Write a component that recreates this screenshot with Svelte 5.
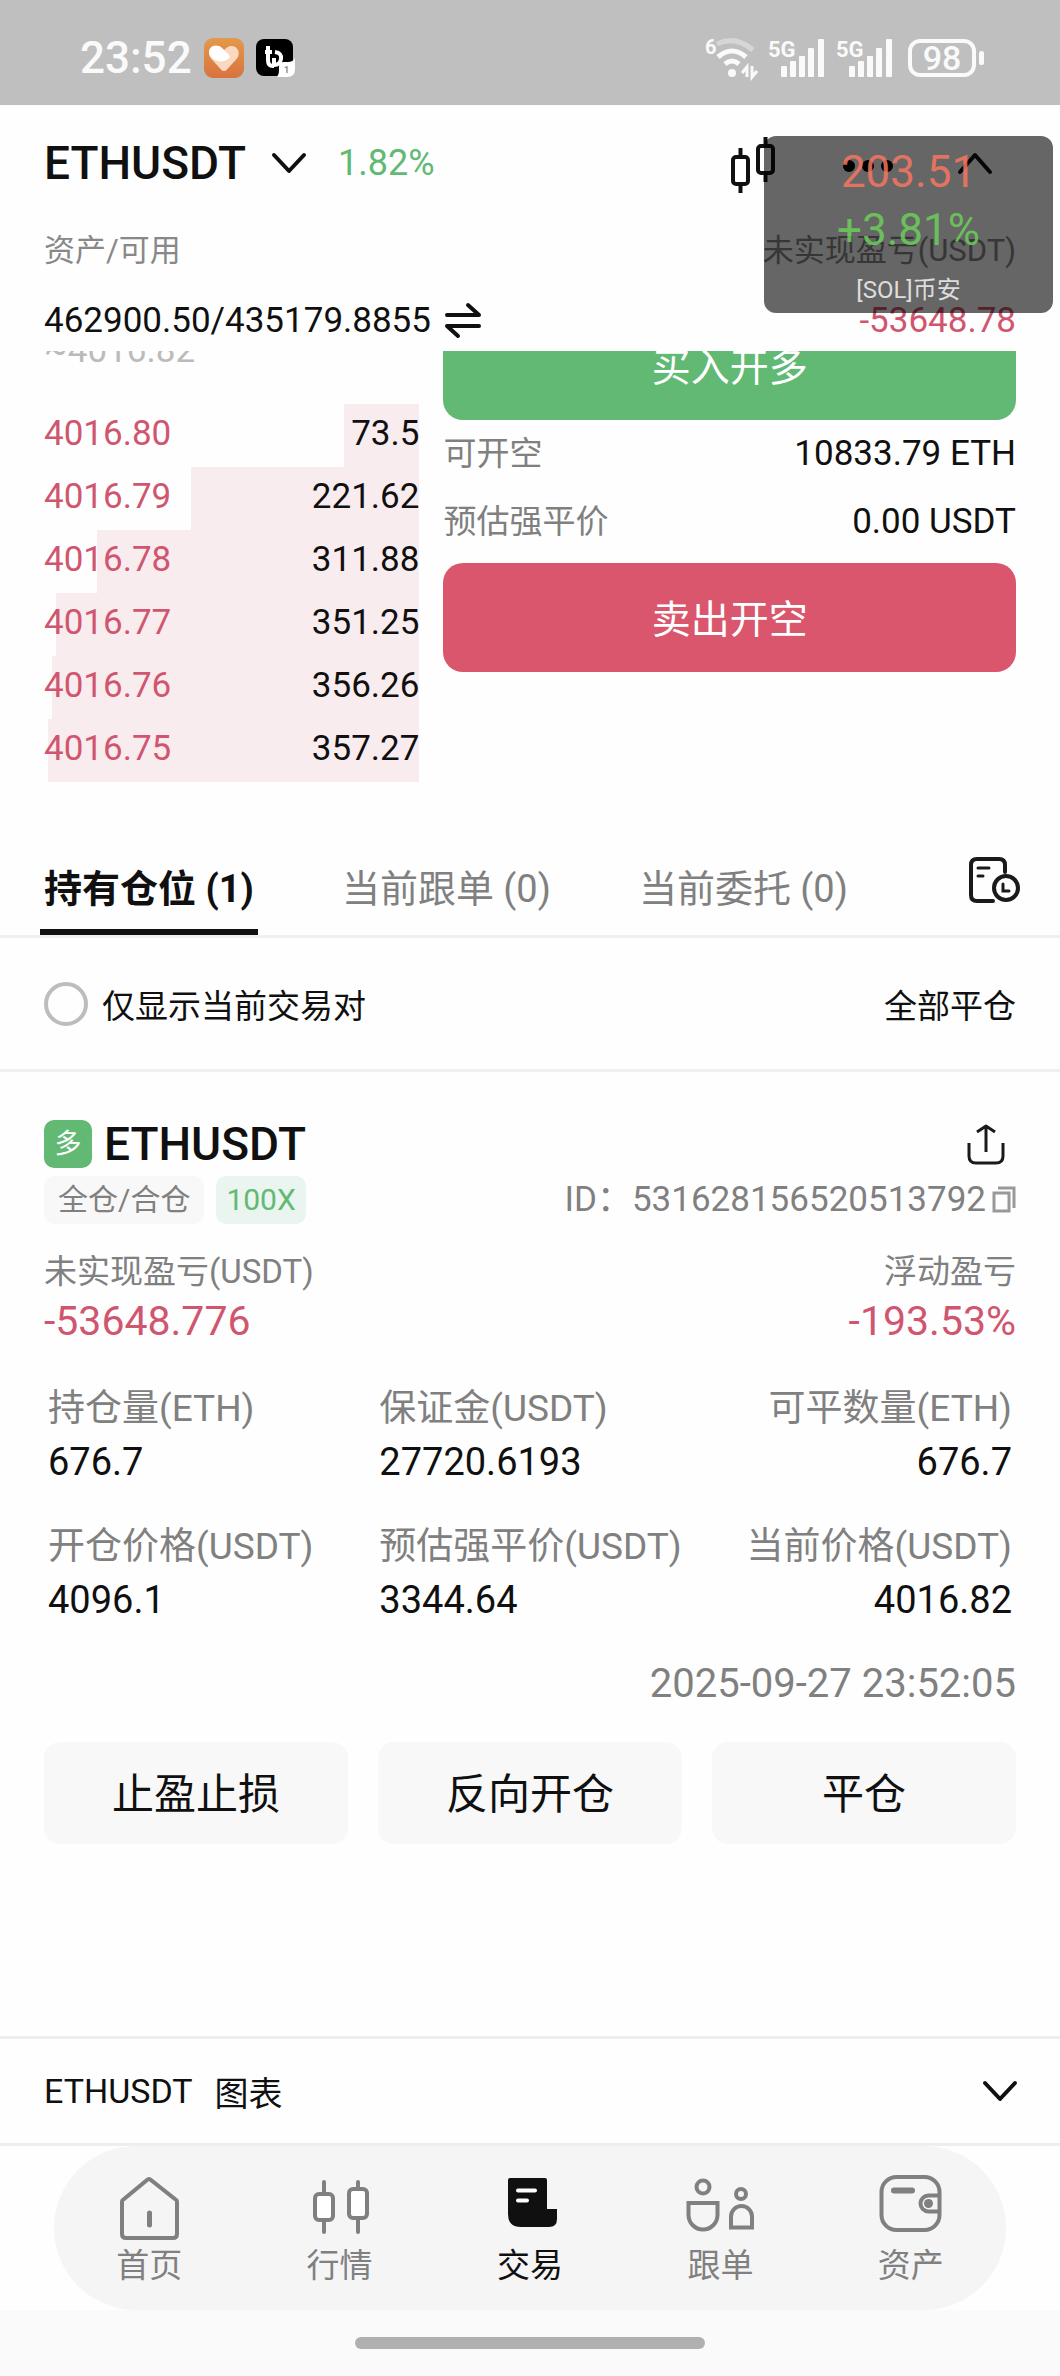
<script lang="ts">
  type Ask = { price: string; amount: string; depth: number };
  type Metric = { label: string; value: string };

  const asks: Ask[] = [
    { price: '4016.80', amount: '73.5', depth: 20 },
    { price: '4016.79', amount: '221.62', depth: 61 },
    { price: '4016.78', amount: '311.88', depth: 86 },
    { price: '4016.77', amount: '351.25', depth: 97 },
    { price: '4016.76', amount: '356.26', depth: 98 },
    { price: '4016.75', amount: '357.27', depth: 99 },
  ];

  const tabs = ['持有仓位 (1)', '当前跟单 (0)', '当前委托 (0)'];

  const metrics: Metric[] = [
    { label: '持仓量(ETH)', value: '676.7' },
    { label: '保证金(USDT)', value: '27720.6193' },
    { label: '可平数量(ETH)', value: '676.7' },
    { label: '开仓价格(USDT)', value: '4096.1' },
    { label: '预估强平价(USDT)', value: '3344.64' },
    { label: '当前价格(USDT)', value: '4016.82' },
  ];

  const actions = ['止盈止损', '反向开仓', '平仓'];

  const navItems = [
    { id: 'home', label: '首页' },
    { id: 'market', label: '行情' },
    { id: 'trade', label: '交易' },
    { id: 'copy', label: '跟单' },
    { id: 'assets', label: '资产' },
  ];

  let activeTab = $state(0);
  let activeNav = $state('trade');
  let onlyCurrentPair = $state(false);
</script>

{#snippet signal()}
  <svg width="57" height="40" viewBox="0 0 57 40" fill="#fafafa" aria-hidden="true">
    <text x="0" y="19" font-size="22" font-weight="700" font-family="Roboto, sans-serif">5G</text>
    <rect x="13" y="28" width="6" height="11" rx="1" />
    <rect x="22" y="23" width="6" height="16" rx="1" />
    <rect x="31" y="18" width="6" height="21" rx="1" />
    <rect x="40" y="10" width="6" height="29" rx="1" />
    <rect x="50" y="1" width="6" height="38" rx="1" />
  </svg>
{/snippet}

<div class="app">
  <div class="status-bar">
    <div class="status-left">
      <span class="clock">23:52</span>
      <svg width="40" height="40" viewBox="0 0 40 40" aria-hidden="true">
        <defs>
          <linearGradient id="heart-bg" x1="0" y1="0" x2="0" y2="1">
            <stop offset="0" stop-color="#e2994c" />
            <stop offset="1" stop-color="#d9733f" />
          </linearGradient>
        </defs>
        <rect width="40" height="40" rx="9" fill="url(#heart-bg)" />
        <path d="M20 33Q18.500 33 17 31.500L7 20.500C1.500 13 9.500 4.500 17 9.500L20 12L23 9.500C30.500 4.500 38.500 13 33 20.500L23 31.500Q21.500 33 20 33Z" fill="#fbd9be" />
        <path d="M6 18C2 10 11 4 18 10L26 18Q25 22 20 23Q12 25 6 18Z" fill="#fff" />
      </svg>
      <svg class="tb-icon" width="40" height="40" viewBox="0 0 40 40" aria-hidden="true">
        <rect x="0" y="1" width="37" height="37" rx="8" />
        <path d="M12 8v14q0 6 5 6h1M9 14h7M19 14q7 1 6 7q-1 6-7 6v-7" fill="none" stroke="#fff" stroke-width="4" />
        <path d="M23 29q0-5 5-5h4q5 0 7-4v11q0 8-8 8H21q2-3 2-6z" fill="#fff" />
        <text x="28" y="35" font-size="9" font-weight="700" fill="#888" font-family="Roboto, sans-serif">1</text>
      </svg>
    </div>
    <div class="status-right">
      <svg width="52" height="40" viewBox="0 0 52 40" fill="none" aria-hidden="true">
        <text x="0" y="16" font-size="20" font-weight="700" fill="#fafafa" font-family="Roboto, sans-serif">6</text>
        <path d="M12 6Q30-3 48 12" stroke="#d6d6d6" stroke-width="5" />
        <path d="M13 19Q27 7 41 19" stroke="#fafafa" stroke-width="5" />
        <path d="M20 26Q27 20 34 26" stroke="#fafafa" stroke-width="5" />
        <circle cx="27" cy="35" r="4" fill="#fafafa" />
        <path d="M42 39V29l-5 6M47 28v11l5-6" stroke="#fafafa" stroke-width="3" />
      </svg>
      {@render signal()}
      {@render signal()}
      <div class="battery"><span>98</span></div>
    </div>
  </div>

  <header class="pair-bar">
    <button class="pair">
      <span class="symbol">ETHUSDT</span>
      <svg width="34" height="22" viewBox="0 0 34 22" aria-hidden="true"><path class="line" d="M2 3l15 16L32 3" /></svg>
    </button>
    <span class="change">1.82%</span>
    <div class="pair-tools">
      <button aria-label="K线">
        <svg width="50" height="60" viewBox="0 0 50 60" fill="none" stroke="#101010" stroke-width="4" aria-hidden="true">
          <rect x="5" y="24" width="15" height="27" rx="3" />
          <path d="M12.500 15v9M12.500 51v9" />
          <rect x="30" y="13" width="15" height="27" rx="3" />
          <path d="M37.500 4v9M37.500 40v9" />
        </svg>
      </button>
      <button aria-label="更多">
        <svg width="52" height="22" viewBox="0 0 52 22" aria-hidden="true">
          <circle cx="7" cy="14" r="6" /><circle cx="26" cy="14" r="6" /><circle cx="45" cy="14" r="6" />
        </svg>
      </button>
      <button aria-label="收起">
        <svg width="34" height="22" viewBox="0 0 34 22" aria-hidden="true"><path class="line" d="M2 20L17 3l15 17" /></svg>
      </button>
    </div>
  </header>

  <section class="account">
    <div class="account-labels">
      <span>资产/可用</span>
      <span>未实现盈亏(USDT)</span>
    </div>
    <div class="account-values">
      <span>462900.50/435179.8855</span>
      <button class="swap" aria-label="划转">
        <svg width="36" height="36" viewBox="0 0 36 36" aria-hidden="true">
          <path class="line" d="M2 12h32L23 2M34 23H2l11 10" />
        </svg>
      </button>
      <span class="loss">-53648.78</span>
    </div>
  </section>

  <main>
    <section class="trade">
      <div class="trade-scroll">
        <div class="book">
          <div class="mark-price">~4016.82</div>
          <table>
            <tbody>
              {#each asks as ask (ask.price)}
                <tr style="background-size: {ask.depth}% 100%">
                  <td class="loss">{ask.price}</td>
                  <td class="amount">{ask.amount}</td>
                </tr>
              {/each}
            </tbody>
          </table>
        </div>
        <div class="order">
          <button class="submit buy">买入开多</button>
          <div class="order-row"><span>可开空</span><b>10833.79 ETH</b></div>
          <div class="order-row"><span>预估强平价</span><b>0.00 USDT</b></div>
          <button class="submit sell">卖出开空</button>
        </div>
      </div>
    </section>

    <nav class="tabs">
      {#each tabs as tab, i}
        <button class="tab" class:active={activeTab === i} onclick={() => (activeTab = i)}>{tab}</button>
      {/each}
      <button class="history" aria-label="历史记录">
        <svg width="52" height="50" viewBox="0 0 52 50" fill="none" stroke="#1a1a1a" stroke-width="4" stroke-linecap="round" aria-hidden="true">
          <path d="M25 46H9q-6 0-6-6V10q0-6 6-6h22q6 0 6 6v7" />
          <path d="M10 13h11M10 21h5" stroke-width="3" />
          <circle cx="38" cy="33" r="12" />
          <path d="M35 29v7h6" stroke-width="3" />
        </svg>
      </button>
    </nav>

    <div class="filter">
      <label>
        <input type="checkbox" bind:checked={onlyCurrentPair} />
        仅显示当前交易对
      </label>
      <button>全部平仓</button>
    </div>

    <article class="position">
      <div class="position-head">
        <span class="side">多</span>
        <h2 class="symbol">ETHUSDT</h2>
        <button class="share" aria-label="分享">
          <svg width="40" height="42" viewBox="0 0 40 42" fill="none" stroke="#1a1a1a" stroke-width="3" stroke-linejoin="round" aria-hidden="true">
            <path d="M3 20v13q0 7 7 7h20q7 0 7-7V20M20 29V3M11 9l9-6l9 6" />
          </svg>
        </button>
      </div>
      <div class="tags">
        <span class="tag">全仓/合仓</span>
        <span class="tag leverage">100X</span>
        <span class="order-id">ID：531628156520513792</span>
        <button class="copy" aria-label="复制">
          <svg width="24" height="28" viewBox="0 0 24 28" fill="none" stroke="#999" stroke-width="3" aria-hidden="true">
            <path d="M2 7h15v18H2zM6 2h16v20" />
          </svg>
        </button>
      </div>
      <dl class="pnl">
        <div><dt>未实现盈亏(USDT)</dt><dd>-53648.776</dd></div>
        <div><dt>浮动盈亏</dt><dd>-193.53%</dd></div>
      </dl>
      <dl class="metrics">
        {#each metrics as metric (metric.label)}
          <div><dt>{metric.label}</dt><dd>{metric.value}</dd></div>
        {/each}
      </dl>
      <time datetime="2025-09-27T23:52:05">2025-09-27 23:52:05</time>
      <div class="actions">
        {#each actions as action}
          <button>{action}</button>
        {/each}
      </div>
    </article>
  </main>

  <footer>
    <button class="chart-toggle">
      <span>ETHUSDT</span>
      <span>图表</span>
      <svg width="34" height="22" viewBox="0 0 34 22" aria-hidden="true"><path class="line" d="M2 3l15 16L32 3" /></svg>
    </button>
    <nav class="bottom-nav">
      {#each navItems as item (item.id)}
        <button class:active={activeNav === item.id} onclick={() => (activeNav = item.id)}>
          <svg width="76" height="70" viewBox="0 0 76 70" fill="none" stroke="currentColor" stroke-width="4" aria-hidden="true">
            {#if item.id === 'home'}
              <path d="M11 30q0-2 2-3L36 8q2-2 4 0l24 19q2 1 2 3v32q0 4-4 4H15q-4 0-4-4z" />
              <path d="M38.500 41v12" stroke-width="5" stroke-linecap="round" />
            {:else if item.id === 'market'}
              <path d="M22 10v50M56 10v50" stroke-linecap="round" />
              <rect x="13" y="22" width="18" height="26" rx="4" fill="#fff" />
              <rect x="47" y="17" width="18" height="29" rx="4" fill="#fff" />
            {:else if item.id === 'trade'}
              <path d="M18 6h35q2 0 2 2v29h10v10q0 8-8 8H29q-13 0-13-13V8q0-2 2-2z" fill="currentColor" stroke="none" />
              <path d="M26 18.500h17M26 28.500h9" stroke="#fff" stroke-linecap="round" />
            {:else if item.id === 'copy'}
              <circle cx="21" cy="15" r="6.500" />
              <path d="M6.500 31h29v12a14.500 14.500 0 0 1-29 0z" />
              <circle cx="59" cy="22" r="5" />
              <path d="M49 55.500V44.500a10.500 10.500 0 0 1 21 0v11z" />
            {:else}
              <rect x="8.500" y="5" width="58" height="53" rx="15" />
              <path d="M21 18.500h18" stroke-width="6" stroke-linecap="round" />
              <path d="M66.500 23.500h-11a8 8 0 0 0 0 16h11" />
              <circle cx="55.500" cy="31.500" r="4.500" fill="currentColor" stroke="none" />
            {/if}
          </svg>
          {item.label}
        </button>
      {/each}
    </nav>
    <div class="home-bar"><span></span></div>
  </footer>

  <aside class="ticker">
    <span class="ticker-price">203.51</span>
    <span class="ticker-change">+3.81%</span>
    <span class="ticker-name">[SOL]币安</span>
  </aside>
</div>

<style>
  :global(body) {
    margin: 0;
    background: #fefefe;
  }

  .app {
    position: relative;
    display: flex;
    flex-direction: column;
    min-height: 100vh;
    color: #101010;
    font-family: Roboto, 'Noto Sans CJK SC', sans-serif;
    font-size: 35px;
  }

  button {
    padding: 0;
    border: none;
    background: none;
    color: inherit;
    font: inherit;
    cursor: pointer;
  }

  svg {
    display: block;
    flex: none;
    overflow: visible;
  }

  dl,
  dd,
  h2 {
    margin: 0;
  }

  .line {
    fill: none;
    stroke: #101010;
    stroke-width: 4;
    stroke-linecap: round;
    stroke-linejoin: round;
  }

  .loss {
    color: #d0566f;
  }

  .symbol {
    font-size: 46px;
    font-weight: 500;
  }

  /* status bar */
  .status-bar {
    display: flex;
    justify-content: space-between;
    align-items: center;
    height: 105px;
    padding: 10px 76px 0 80px;
    box-sizing: border-box;
    background: #bfbfbf;
    color: #fafafa;
  }

  .status-left {
    display: flex;
    align-items: center;
    gap: 12px;
  }

  .status-right {
    display: flex;
    align-items: center;
    gap: 11px;
  }

  .clock {
    font-size: 44px;
    font-weight: 500;
  }

  .battery {
    position: relative;
    width: 60px;
    margin: 0 8px 0 4px;
    border: 4px solid #fafafa;
    border-radius: 12px;
    font-size: 34px;
    font-weight: 500;
    line-height: 30px;
    text-align: center;
  }

  .battery::after {
    content: '';
    position: absolute;
    top: 8px;
    right: -12px;
    width: 5px;
    height: 14px;
    border-radius: 2px;
    background: #fafafa;
  }

  /* pair header */
  .pair-bar {
    display: flex;
    align-items: center;
    height: 116px;
    padding: 0 68px 0 44px;
  }

  .pair {
    display: flex;
    align-items: center;
    gap: 26px;
  }

  .change {
    margin-left: 32px;
    color: #62b974;
    font-size: 36px;
  }

  .pair-tools {
    display: flex;
    align-items: center;
    gap: 64px;
    margin-left: auto;
  }

  /* account */
  .account {
    padding: 0 44px;
  }

  .account-labels {
    display: flex;
    justify-content: space-between;
    padding-bottom: 6px;
    color: #888;
    font-size: 31px;
    line-height: 60px;
  }

  .account-values {
    display: flex;
    align-items: center;
    gap: 14px;
    padding-top: 4px;
    line-height: 60px;
  }

  .account-values .loss {
    margin-left: auto;
  }

  main {
    flex: 1;
  }

  /* trade panel, scrolled under the account header */
  .trade {
    overflow: hidden;
    padding: 0 44px;
  }

  .trade-scroll {
    display: grid;
    grid-template-columns: 375fr 572fr;
    column-gap: 24px;
    margin-top: -40px;
  }

  .book {
    padding-top: 8px;
  }

  .mark-price {
    margin-bottom: 22px;
    color: #bbb;
    line-height: 63px;
  }

  table {
    width: 100%;
    border-collapse: collapse;
  }

  tr {
    background: linear-gradient(#f9ecef, #f9ecef) no-repeat right;
  }

  td {
    padding: 0 0 4px;
    line-height: 59px;
  }

  .amount {
    text-align: right;
  }

  .submit {
    display: block;
    width: 100%;
    height: 109px;
    padding-bottom: 4px;
    border-radius: 20px;
    color: #fff;
    font-size: 39px;
  }

  .buy {
    background: #62b974;
  }

  .sell {
    margin-top: 7px;
    background: #d9566d;
  }

  .order-row {
    display: flex;
    justify-content: space-between;
    line-height: 68px;
  }

  .order-row span {
    color: #808080;
    font-size: 33px;
  }

  .order-row b {
    font-weight: 400;
  }

  /* position tabs */
  .tabs {
    display: flex;
    gap: 80px;
    margin-top: 55px;
    padding: 0 40px;
    border-bottom: 3px solid #f0f0f0;
  }

  .tab {
    padding: 12px 4px 0;
    border-bottom: 6px solid transparent;
    color: #808080;
    font-size: 38px;
    line-height: 80px;
  }

  .tab.active {
    border-color: #101010;
    color: #101010;
    font-weight: 700;
  }

  .history {
    margin-left: auto;
    padding-bottom: 12px;
  }

  .filter {
    display: flex;
    justify-content: space-between;
    align-items: center;
    height: 131px;
    padding: 0 44px;
    border-bottom: 3px solid #f0f0f0;
    font-size: 33px;
  }

  .filter label {
    display: flex;
    align-items: center;
    gap: 14px;
  }

  .filter input {
    width: 44px;
    height: 44px;
    margin: 0;
    border: 4px solid #bdbdbd;
    border-radius: 50%;
    appearance: none;
  }

  .filter input:checked {
    border-width: 14px;
    border-color: #101010;
  }

  /* position card */
  .position {
    padding: 48px 44px;
  }

  .position-head {
    display: flex;
    align-items: center;
    gap: 12px;
    height: 48px;
  }

  .side {
    width: 48px;
    border-radius: 10px;
    background: #62b974;
    color: #fff;
    font-size: 27px;
    line-height: 48px;
    text-align: center;
  }

  .share {
    margin: 0 10px 0 auto;
  }

  .tags {
    display: flex;
    align-items: center;
    height: 48px;
    margin-top: 8px;
    color: #808080;
    line-height: 48px;
  }

  .tag {
    margin-right: 12px;
    padding: 0 14px;
    border-radius: 10px;
    background: #f8f8f8;
    font-size: 30px;
  }

  .leverage {
    padding: 0 10px;
    background: #e9f5ee;
    color: #62b974;
  }

  .order-id {
    margin: 0 6px 0 auto;
  }

  .pnl {
    display: flex;
    justify-content: space-between;
    margin-top: 25px;
  }

  .pnl dt {
    color: #808080;
    font-size: 33px;
    line-height: 46px;
  }

  .pnl dd {
    color: #d0566f;
    font-size: 41px;
    line-height: 52px;
  }

  .pnl div:last-child {
    text-align: right;
  }

  .metrics {
    display: grid;
    grid-template-columns: 331fr 316fr 316fr;
    row-gap: 32px;
    padding: 36px 4px 32px;
  }

  .metrics dt {
    color: #808080;
    font-size: 37px;
    line-height: 52px;
    white-space: nowrap;
  }

  .metrics dd {
    font-size: 38px;
    line-height: 54px;
  }

  .metrics div:nth-child(3n) {
    text-align: right;
  }

  time {
    display: block;
    color: #808080;
    font-size: 40px;
    line-height: 50px;
    text-align: right;
  }

  .actions {
    display: grid;
    grid-template-columns: repeat(3, 1fr);
    gap: 30px;
    margin-top: 33px;
  }

  .actions button {
    height: 102px;
    padding-bottom: 6px;
    border-radius: 16px;
    background: #f8f8f8;
    font-size: 42px;
  }

  /* footer */
  .chart-toggle {
    display: flex;
    align-items: center;
    gap: 22px;
    width: 100%;
    height: 110px;
    padding: 0 43px 0 44px;
    border-top: 3px solid #eee;
    border-bottom: 3px solid #eee;
    font-size: 34px;
  }

  .chart-toggle svg {
    margin-left: auto;
  }

  .bottom-nav {
    display: grid;
    grid-template-columns: repeat(5, 1fr);
    height: 164px;
    margin: 0 54px;
    border-radius: 82px;
    background: #f5f5f5;
  }

  .bottom-nav button {
    display: flex;
    flex-direction: column;
    align-items: center;
    padding-top: 26px;
    color: #808080;
    font-size: 33px;
    line-height: 48px;
  }

  .bottom-nav button.active {
    color: #101010;
  }

  .home-bar {
    display: flex;
    justify-content: center;
    height: 39px;
    padding-top: 27px;
    background: #fafafa;
  }

  .home-bar span {
    width: 33%;
    height: 12px;
    border-radius: 6px;
    background: #b0b0b0;
  }

  /* floating price widget */
  .ticker {
    position: absolute;
    top: 136px;
    right: 7px;
    display: flex;
    flex-direction: column;
    align-items: center;
    width: 289px;
    padding: 7px 0 3px;
    box-sizing: border-box;
    border-radius: 12px;
    background: rgba(0, 0, 0, 0.6);
    font-size: 44px;
    line-height: 58px;
  }

  .ticker-price {
    color: rgba(250, 118, 95, 0.85);
  }

  .ticker-change {
    color: rgba(108, 208, 90, 0.85);
  }

  .ticker-name {
    margin-top: 11px;
    color: #ddd;
    font-size: 24px;
    line-height: 40px;
  }
</style>
